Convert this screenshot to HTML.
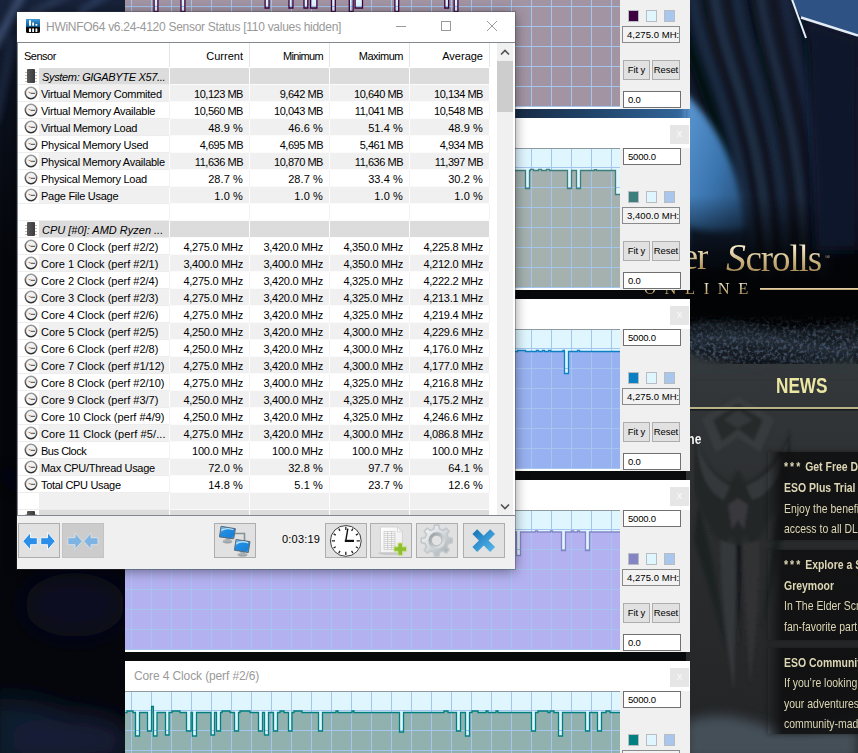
<!DOCTYPE html>
<html lang="en"><head><meta charset="utf-8"><title>HWiNFO64 Sensor Status</title>
<style>
*{box-sizing:border-box;margin:0;padding:0}
html,body{width:858px;height:753px;overflow:hidden;background:#04060b}
body{position:relative;font-family:"Liberation Sans",sans-serif;font-size:11px;color:#000}
#bg{position:absolute;left:0;top:0}
/* ---- ESO launcher bits ---- */
.eso{position:absolute;white-space:nowrap;font-family:"Liberation Serif",serif;color:#dccb9f;background:linear-gradient(#f3e8c6 25%,#c9b07a 60%,#a88a55 85%);-webkit-background-clip:text;background-clip:text;-webkit-text-fill-color:transparent}
.news{position:absolute;white-space:nowrap;font-family:"Liberation Sans",sans-serif;color:#ddd6b8;transform-origin:0 50%}
.nb{position:absolute;left:768px;width:98px;background:linear-gradient(to right,rgba(14,14,15,0),rgba(14,14,15,.85) 14px);box-shadow:0 0 4px 1px rgba(14,14,15,.35)}
.news i{font-style:normal;letter-spacing:2.600px}
/* ---- graph windows ---- */
.gw{position:absolute;left:125px;width:565px;height:172px;background:#fff}
.gt{position:absolute;left:9px;top:7px;font-size:12px;line-height:16px;color:#9a9a9a;white-space:nowrap;letter-spacing:-.12px}
.gc{position:absolute;left:545px;top:7px;width:19px;height:19px;background:#e6e6e6;color:#fafafa;font-size:11px;line-height:17px;text-align:center}
.gr{position:absolute;left:0;top:30px}
.gp{position:absolute;left:495px;top:30px;width:70px;height:142px;background:#f0f0f0}
.bx{position:absolute;left:3px;width:58px;height:17px;border:1px solid #707070;background:#fff;font-size:9.500px;line-height:15px;padding-left:4px;letter-spacing:-.2px;white-space:nowrap;overflow:hidden}
.b1{top:0}.b2{top:59px;left:2px;background:#f2f2f2;border-color:#8a8a8a;padding-left:4px;letter-spacing:.05px}.b3{top:124px}
.sw{position:absolute;top:43px;width:11px;height:12px;border:1px solid #b9bcc0}
.bt{position:absolute;top:93px;height:20px;border:1px solid #adadad;background:#e1e1e1;font-size:9.500px;line-height:18px;letter-spacing:-.1px;text-align:center;white-space:nowrap}
/* ---- HWiNFO window ---- */
#hw{position:absolute;left:17px;top:12px;width:498px;height:557px;background:#fff;box-shadow:0 0 0 1px rgba(60,60,70,.35),0 2px 12px rgba(0,0,0,.45)}
#tb{position:absolute;left:0;top:0;width:498px;height:30px;background:#fff}
#tt{position:absolute;left:29px;top:7px;font-size:12px;line-height:16px;color:#999;white-space:nowrap;letter-spacing:-.28px}
#lv{position:absolute;left:0;top:30px;width:498px;height:474px;border:1px solid #828790;border-right:none;background:#fff;overflow:hidden}
#hd{position:absolute;left:0;top:0;width:472px;height:25px;background:#fff}
#hd div{position:absolute;top:0;height:24px;line-height:26px;border-right:1px solid #e5e5e5;white-space:nowrap}
.r{position:absolute;left:0;width:472px;height:17px;white-space:nowrap}
.r>div{position:absolute;top:0;height:17px;line-height:18px;border-bottom:1px solid #fbfbfb;border-right:1px solid #f2f2f2;overflow:hidden}
.r .c0{left:0;width:152px}
.r .c0 b,.r .c0 em{position:absolute;left:21px;top:0;width:130px;height:16px;padding-left:2px;font-weight:normal;line-height:18px;overflow:hidden}
.r .c0 em{padding-left:3px}
.r .c{width:80px;text-align:right;padding-right:6px}
.r .c:nth-child(2){left:152px}.r .c:nth-child(3){left:232px}.r .c:nth-child(4){left:312px}.r .c:nth-child(5){left:392px}
.r.o .c,.r.o .c0 b{background:#f0f0f0}
.r.o>div{border-right-color:#fdfdfd}
.r.g .c,.r.g .c0 em{background:#dcdcdc}
.r.g>div{border-right-color:#fdfdfd}
.r .c0{border-bottom-color:#ededed}
.ic{position:absolute;left:6px;top:1px}
.r.g .ic{left:6px;top:0}
#sb{position:absolute;left:479px;top:0;width:16px;height:472px;background:#f0f0f0}
#sb i{position:absolute;left:0;top:18px;width:16px;height:51px;background:#cdcdcd}
#bar{position:absolute;left:0;top:504px;width:498px;height:53px;background:#f0f0f0}
.tbn{position:absolute;top:7px;width:42px;height:35px;border:1px solid #adadad;background:#e1e1e1}
.tbn svg{position:absolute;left:0;top:0}
#tm{position:absolute;left:265px;top:15px;font-size:11px;line-height:16px;letter-spacing:.2px}
</style></head>
<body>
<svg id="bg" width="858" height="753" viewBox="0 0 858 753">
<defs>
<linearGradient id="ckg" x1="0" y1="0" x2="0" y2="1"><stop offset="0" stop-color="#9a9a9a"/><stop offset="1" stop-color="#2e2e2e"/></linearGradient>
<linearGradient id="chg" x1="0" y1="0" x2="1" y2="0"><stop offset="0" stop-color="#5a5a5a"/><stop offset="1" stop-color="#3a3a3a"/></linearGradient>
<filter id="bl6" x="-30%" y="-30%" width="160%" height="160%"><feGaussianBlur stdDeviation="6"/></filter>
<filter id="bl12" x="-30%" y="-30%" width="160%" height="160%"><feGaussianBlur stdDeviation="12"/></filter>
<filter id="bl3" x="-30%" y="-30%" width="160%" height="160%"><feGaussianBlur stdDeviation="3"/></filter>
<linearGradient id="gold" x1="0" y1="0" x2="0" y2="1"><stop offset="0" stop-color="#efe2bd"/><stop offset="1" stop-color="#b39560"/></linearGradient>
</defs>
<rect width="858" height="753" fill="#04060b"/>
<defs><linearGradient id="tl" x1="0" y1="0" x2="0" y2="1"><stop offset="0" stop-color="#18233a"/><stop offset=".35" stop-color="#0b111d"/><stop offset="1" stop-color="#04060b"/></linearGradient><linearGradient id="rc" x1="0" y1="0" x2="0" y2="1"><stop offset="0" stop-color="#121c2d"/><stop offset=".6" stop-color="#0e1726"/><stop offset=".8" stop-color="#05080e"/><stop offset="1" stop-color="#020305"/></linearGradient><linearGradient id="sky" x1="0" y1="0" x2="1" y2="1"><stop offset="0" stop-color="#5f9bd6"/><stop offset=".5" stop-color="#3a74ae"/><stop offset="1" stop-color="#1c3a5c"/></linearGradient><linearGradient id="pan" x1="0" y1="0" x2="0" y2="1"><stop offset="0" stop-color="#34383b"/><stop offset=".4" stop-color="#2b2d2f"/><stop offset="1" stop-color="#222426"/></linearGradient><linearGradient id="gapg" x1="0" y1="0" x2="1" y2="0"><stop offset="0" stop-color="#15263d"/><stop offset=".5" stop-color="#21456c"/><stop offset="1" stop-color="#34699e"/></linearGradient></defs><rect x="0" y="0" width="130" height="260" fill="url(#tl)"/><g filter="url(#bl3)" fill="none" stroke-linecap="round"><path d="M-5 45L22 -5" stroke="#3d4f73" stroke-width="7"/><path d="M30 14L70 -6" stroke="#2b3a58" stroke-width="6"/><path d="M80 12L108 -6" stroke="#32456a" stroke-width="5"/><path d="M-4 120L12 40" stroke="#1b2741" stroke-width="8"/></g><g filter="url(#bl12)"><ellipse cx="75" cy="605" rx="50" ry="32" fill="#0a1120"/><path d="M-10 700Q60 690 130 760L-10 770Z" fill="#111a2e"/><ellipse cx="70" cy="740" rx="60" ry="26" fill="#141e34"/><path d="M0 470Q50 500 100 540" stroke="#080d18" stroke-width="14" fill="none"/></g><rect x="125" y="100" width="565" height="30" fill="#0b1220"/><rect x="500" y="100" width="190" height="30" fill="url(#gapg)"/><rect x="125" y="285" width="565" height="20" fill="#06080c"/><rect x="125" y="465" width="565" height="20" fill="#0a0b0d"/><rect x="125" y="648" width="565" height="20" fill="#08090b"/><rect x="686" y="0" width="172" height="335" fill="url(#rc)"/><g filter="url(#bl3)" fill="none" stroke-linecap="round"><path d="M676 -8C686 70 733 120 742 275" stroke="#05080e" stroke-width="9"/><path d="M692 -8C702 70 746 120 754 275" stroke="#1f2d46" stroke-width="7"/><path d="M704 -8C714 70 756 120 763 275" stroke="#080c14" stroke-width="5"/><path d="M714 -8C724 70 764 120 770 275" stroke="#27374f" stroke-width="6"/><path d="M726 -8C736 70 774 120 779 275" stroke="#0a0f19" stroke-width="5"/><path d="M736 -8C746 70 783 120 787 275" stroke="#1c2a42" stroke-width="8"/><path d="M750 -8C760 70 794 120 797 275" stroke="#070b13" stroke-width="5"/><path d="M760 -8C770 70 803 120 805 275" stroke="#25354e" stroke-width="5"/><path d="M772 -8C782 70 813 120 814 275" stroke="#0b111c" stroke-width="6"/><path d="M784 -8C794 70 823 120 823 275" stroke="#1b2840" stroke-width="8"/><path d="M798 -8C808 70 834 120 833 275" stroke="#080d16" stroke-width="5"/><path d="M825 40Q835 140 832 250" stroke="#13203a" stroke-width="14"/><path d="M850 40Q856 140 852 240" stroke="#0c1424" stroke-width="8"/></g><g filter="url(#bl3)"><path d="M684 92Q720 126 737 180Q747 215 746 250L732 262Q705 268 684 262Z" fill="url(#sky)"/><path d="M688 226Q715 234 746 228L746 268L686 270Z" fill="#152840"/></g><defs><linearGradient id="dk" x1="0" y1="0" x2="0" y2="1"><stop offset="0" stop-color="#020305" stop-opacity="0"/><stop offset=".55" stop-color="#020305" stop-opacity=".75"/><stop offset="1" stop-color="#020305" stop-opacity="1"/></linearGradient></defs><rect x="686" y="195" width="172" height="105" fill="url(#dk)"/><path d="M808 40L802 19L858 38V250H816Z" fill="#0d172c" filter="url(#bl6)"/><path d="M792 0H858V36L801 18Z" fill="#2f5285"/><g filter="url(#bl3)" opacity=".0"></g><path d="M791.500 -2L806 38" stroke="#e6eef6" stroke-width="2" fill="none"/><path d="M801 17.500L858 35.500" stroke="#e3ebf4" stroke-width="2.400" fill="none"/><rect x="686" y="296" width="172" height="30" fill="#020304"/><g filter="url(#bl3)"><path d="M686 325Q720 318 760 326T858 322V362Q820 372 790 366T730 362T686 356Z" fill="#171c24"/><path d="M690 342Q740 334 800 346T858 340" stroke="#222a35" stroke-width="10" fill="none"/></g><defs><filter id="nz" x="0" y="0" width="100%" height="100%" color-interpolation-filters="sRGB"><feTurbulence type="fractalNoise" baseFrequency=".3" numOctaves="3" seed="7" result="t"/><feColorMatrix in="t" type="matrix" values="0 0 0 0 .25  0 0 0 0 .31  0 0 0 0 .39  0 0 0 3.200 -1.400"/></filter><linearGradient id="nzm" x1="0" y1="0" x2="0" y2="1"><stop offset="0" stop-color="#fff" stop-opacity="0"/><stop offset=".45" stop-color="#fff" stop-opacity="1"/><stop offset=".8" stop-color="#fff" stop-opacity="1"/><stop offset="1" stop-color="#fff" stop-opacity="0"/></linearGradient><mask id="nzk"><rect x="686" y="314" width="172" height="56" fill="url(#nzm)"/></mask></defs><g mask="url(#nzk)"><rect x="686" y="314" width="172" height="56" filter="url(#nz)"/></g><rect x="686" y="364" width="172" height="389" fill="url(#pan)"/><g filter="url(#bl3)"><path d="M686 352Q700 358 720 362T770 368T830 364L858 360V374H686Z" fill="#33373a"/></g><defs><filter id="bl1" x="-20%" y="-20%" width="140%" height="140%"><feGaussianBlur stdDeviation="1.600"/></filter></defs><g filter="url(#bl1)"><path d="M738 396L774 419L760 452L738 437L716 452L702 419Z" fill="#383b3e"/><path d="M738 404L763 420L754 441L738 429L722 441L713 420Z" fill="#27292b"/><path d="M738 410L752 420L738 428L724 420Z" fill="#34373a"/><path d="M694 432Q704 470 730 482L738 470L746 482Q776 468 790 430Q796 480 770 520Q760 540 752 548L745 536L738 552L731 536L724 548Q700 520 694 490Z" fill="#232527"/><path d="M696 440Q706 474 730 486L724 500Q700 490 696 440ZM788 440Q776 474 746 486L752 500Q782 490 788 440Z" fill="#35383b"/><path d="M728 505L738 498L748 505L744 530L738 520L732 530Z" fill="#37393c"/><path d="M720 540L736 545L734 692Q722 620 720 540Z" fill="#34373a"/><path d="M742 545L759 540Q760 610 750 684Z" fill="#303336"/><path d="M698 505Q716 560 726 650Q710 590 694 540Z" fill="#1f2123"/><path d="M778 505Q770 560 762 630Q776 570 784 530Z" fill="#1f2123"/><path d="M736 545L742 545L739 650Z" fill="#18191b"/></g><g filter="url(#bl6)"><path d="M686 722Q720 708 760 724T858 716V760H686Z" fill="#454f58"/></g><rect x="686" y="407" width="172" height="2" fill="#b9b285"/><rect x="686" y="409" width="172" height="1.500" fill="#17181a"/><rect x="760" y="288" width="98" height="2" fill="url(#gold)"/>
</svg>
<div class="eso" id="el" style="right:150px;top:237px;font-size:37px;line-height:40px;letter-spacing:-1.300px">Elder</div><div class="eso" style="left:726px;top:237px;font-size:37px;line-height:40px;letter-spacing:-1.100px"><span style="font-size:40px;font-style:italic;letter-spacing:-.5px">S</span>crolls<span style="font-size:7px;vertical-align:12px;margin-left:4px;letter-spacing:0">®</span></div><div class="eso" style="left:644px;top:280px;font-size:16.500px;line-height:18px;letter-spacing:8.600px;color:#c9b88a">ONLINE</div><div class="news" style="left:776px;top:374px;font-size:22px;line-height:24px;font-weight:bold;color:#ebe6a2;transform:scaleX(.78)">NEWS</div><div class="news" style="left:664px;top:429px;font-size:15px;line-height:20px;font-weight:bold;color:#f4f4f4;transform:scaleX(.8)">Online</div><div class="nb" style="top:452px;height:88px"></div><div class="nb" style="top:550px;height:90px"></div><div class="nb" style="top:648px;height:86px"></div><div class="news" style="left:784px;top:458px;font-size:13.500px;line-height:18px;font-weight:bold;color:#dcd6b4;transform:scaleX(.775)"><i>***</i> Get Free DLC</div><div class="news" style="left:784px;top:479px;font-size:13.500px;line-height:18px;font-weight:bold;color:#dcd6b4;transform:scaleX(.775)">ESO Plus Trial</div><div class="news" style="left:784px;top:500px;font-size:13.500px;line-height:18px;color:#dcd6b4;transform:scaleX(.775)">Enjoy the benefits</div><div class="news" style="left:784px;top:520px;font-size:13.500px;line-height:18px;color:#dcd6b4;transform:scaleX(.775)">access to all DLC</div><div class="news" style="left:784px;top:556px;font-size:13.500px;line-height:18px;font-weight:bold;color:#dcd6b4;transform:scaleX(.775)"><i>***</i> Explore a Sk</div><div class="news" style="left:784px;top:577px;font-size:13.500px;line-height:18px;font-weight:bold;color:#dcd6b4;transform:scaleX(.775)">Greymoor</div><div class="news" style="left:784px;top:597px;font-size:13.500px;line-height:18px;color:#dcd6b4;transform:scaleX(.775)">In The Elder Scro</div><div class="news" style="left:784px;top:618px;font-size:13.500px;line-height:18px;color:#dcd6b4;transform:scaleX(.775)">fan-favorite part</div><div class="news" style="left:784px;top:654px;font-size:13.500px;line-height:18px;font-weight:bold;color:#dcd6b4;transform:scaleX(.775)">ESO Community</div><div class="news" style="left:784px;top:674px;font-size:13.500px;line-height:18px;color:#dcd6b4;transform:scaleX(.775)">If you’re looking f</div><div class="news" style="left:784px;top:695px;font-size:13.500px;line-height:18px;color:#dcd6b4;transform:scaleX(.775)">your adventures,</div><div class="news" style="left:784px;top:715px;font-size:13.500px;line-height:18px;color:#dcd6b4;transform:scaleX(.775)">community-made</div>
<div class="gw" style="top:-63px"><div class="gt">Core 0 Clock (perf #2/2)</div><div class="gc"><span>x</span></div><svg class="gr" width="495" height="140" viewBox="0 0 495 140"><rect width="495" height="140" fill="#dff6ff"/><path d="M0.0 20.5 L29.1 20.5 L29.1 44.5 L32.9 44.5 L32.9 20.5 L56.0 20.5 L56.0 44.5 L59.9 44.5 L59.9 20.5 L140.1 20.5 L140.1 41.0 L144.0 41.0 L144.0 20.5 L164.0 20.5 L164.0 41.0 L167.9 41.0 L167.9 20.5 L179.0 20.5 L179.0 41.0 L182.8 41.0 L182.8 20.5 L185.5 20.5 L185.5 41.0 L191.9 41.0 L191.9 20.5 L206.5 20.5 L206.5 44.5 L210.3 44.5 L210.3 20.5 L224.3 20.5 L224.3 44.5 L228.1 44.5 L228.1 20.5 L230.1 20.5 L230.1 41.0 L237.5 41.0 L237.5 20.5 L269.9 20.5 L269.9 44.5 L273.7 44.5 L273.7 20.5 L319.8 20.5 L319.8 41.0 L323.6 41.0 L323.6 20.5 L329.2 20.5 L329.2 44.5 L332.9 44.5 L332.9 20.5 L495.0 20.5 L495.0 140.0 L0.0 140.0 Z" fill="#a394a4"/><g stroke="#a4c5ee" stroke-width="1" fill="none"><path d="M6.5 0V140"/><path d="M26.5 0V140"/><path d="M46.5 0V140"/><path d="M66.5 0V140"/><path d="M86.5 0V140"/><path d="M106.5 0V140"/><path d="M126.5 0V140"/><path d="M146.5 0V140"/><path d="M166.5 0V140"/><path d="M186.5 0V140"/><path d="M206.5 0V140"/><path d="M226.5 0V140"/><path d="M246.5 0V140"/><path d="M266.5 0V140"/><path d="M286.5 0V140"/><path d="M306.5 0V140"/><path d="M326.5 0V140"/><path d="M346.5 0V140"/><path d="M366.5 0V140"/><path d="M386.5 0V140"/><path d="M406.5 0V140"/><path d="M426.5 0V140"/><path d="M446.5 0V140"/><path d="M466.5 0V140"/><path d="M486.5 0V140"/><path d="M0 19.5H495"/><path d="M0 39.5H495"/><path d="M0 59.5H495"/><path d="M0 79.5H495"/><path d="M0 99.5H495"/><path d="M0 119.5H495"/><path d="M0 139.5H495"/></g><path d="M0.0 20.5 L29.1 20.5 L29.1 44.5 L32.9 44.5 L32.9 20.5 L56.0 20.5 L56.0 44.5 L59.9 44.5 L59.9 20.5 L140.1 20.5 L140.1 41.0 L144.0 41.0 L144.0 20.5 L164.0 20.5 L164.0 41.0 L167.9 41.0 L167.9 20.5 L179.0 20.5 L179.0 41.0 L182.8 41.0 L182.8 20.5 L185.5 20.5 L185.5 41.0 L191.9 41.0 L191.9 20.5 L206.5 20.5 L206.5 44.5 L210.3 44.5 L210.3 20.5 L224.3 20.5 L224.3 44.5 L228.1 44.5 L228.1 20.5 L230.1 20.5 L230.1 41.0 L237.5 41.0 L237.5 20.5 L269.9 20.5 L269.9 44.5 L273.7 44.5 L273.7 20.5 L319.8 20.5 L319.8 41.0 L323.6 41.0 L323.6 20.5 L329.2 20.5 L329.2 44.5 L332.9 44.5 L332.9 20.5 L495.0 20.5" fill="none" stroke="#3d0040" stroke-width="1.3"/><path d="M0 .5H495" stroke="#8d9aa0" stroke-width="1"/></svg><div class="gp"><div class="bx b1">5000.0</div><i class="sw" style="left:8px;background:#3d0040"></i><i class="sw" style="left:26px;background:#dff6ff"></i><i class="sw" style="left:44px;background:#a9c7ed"></i><div class="bx b2">4,275.0 MH:</div><div class="bt" style="left:3px;width:27px">Fit y</div><div class="bt" style="left:32px;width:28px">Reset</div><div class="bx b3">0.0</div></div></div><div class="gw" style="top:118px"><div class="gt">Core 1 Clock (perf #2/1)</div><div class="gc"><span>x</span></div><svg class="gr" width="495" height="140" viewBox="0 0 495 140"><rect width="495" height="140" fill="#dff6ff"/><path d="M0.0 22.5 L400.5 22.5 L400.5 40.5 L404.5 40.5 L404.5 22.5 L405.5 22.5 L405.5 21.4 L408.5 21.4 L408.5 22.5 L413.5 22.5 L413.5 21.4 L416.5 21.4 L416.5 22.5 L421.5 22.5 L421.5 21.4 L424.5 21.4 L424.5 22.5 L442.5 22.5 L442.5 40.5 L446.5 40.5 L446.5 22.5 L451.5 22.5 L451.5 40.5 L455.5 40.5 L455.5 22.5 L469.5 22.5 L469.5 21.6 L471.5 21.6 L471.5 22.5 L490.5 22.5 L490.5 46.5 L500.0 46.5 L500.0 22.5 L495.0 22.5 L495.0 140.0 L0.0 140.0 Z" fill="#a4b1ae"/><g stroke="#a4c5ee" stroke-width="1" fill="none"><path d="M6.5 0V140"/><path d="M26.5 0V140"/><path d="M46.5 0V140"/><path d="M66.5 0V140"/><path d="M86.5 0V140"/><path d="M106.5 0V140"/><path d="M126.5 0V140"/><path d="M146.5 0V140"/><path d="M166.5 0V140"/><path d="M186.5 0V140"/><path d="M206.5 0V140"/><path d="M226.5 0V140"/><path d="M246.5 0V140"/><path d="M266.5 0V140"/><path d="M286.5 0V140"/><path d="M306.5 0V140"/><path d="M326.5 0V140"/><path d="M346.5 0V140"/><path d="M366.5 0V140"/><path d="M386.5 0V140"/><path d="M406.5 0V140"/><path d="M426.5 0V140"/><path d="M446.5 0V140"/><path d="M466.5 0V140"/><path d="M486.5 0V140"/><path d="M0 19.5H495"/><path d="M0 39.5H495"/><path d="M0 59.5H495"/><path d="M0 79.5H495"/><path d="M0 99.5H495"/><path d="M0 119.5H495"/><path d="M0 139.5H495"/></g><path d="M0.0 22.5 L400.5 22.5 L400.5 40.5 L404.5 40.5 L404.5 22.5 L405.5 22.5 L405.5 21.4 L408.5 21.4 L408.5 22.5 L413.5 22.5 L413.5 21.4 L416.5 21.4 L416.5 22.5 L421.5 22.5 L421.5 21.4 L424.5 21.4 L424.5 22.5 L442.5 22.5 L442.5 40.5 L446.5 40.5 L446.5 22.5 L451.5 22.5 L451.5 40.5 L455.5 40.5 L455.5 22.5 L469.5 22.5 L469.5 21.6 L471.5 21.6 L471.5 22.5 L490.5 22.5 L490.5 46.5 L500.0 46.5 L500.0 22.5 L495.0 22.5" fill="none" stroke="#3c7f7c" stroke-width="1.3"/><path d="M0 .5H495" stroke="#8d9aa0" stroke-width="1"/></svg><div class="gp"><div class="bx b1">5000.0</div><i class="sw" style="left:8px;background:#3c7f7c"></i><i class="sw" style="left:26px;background:#dff6ff"></i><i class="sw" style="left:44px;background:#a9c7ed"></i><div class="bx b2">3,400.0 MH:</div><div class="bt" style="left:3px;width:27px">Fit y</div><div class="bt" style="left:32px;width:28px">Reset</div><div class="bx b3">0.0</div></div></div><div class="gw" style="top:299px"><div class="gt">Core 2 Clock (perf #2/4)</div><div class="gc"><span>x</span></div><svg class="gr" width="495" height="140" viewBox="0 0 495 140"><rect width="495" height="140" fill="#dff6ff"/><path d="M0.0 22.5 L392.5 22.5 L392.5 21.5 L400.5 21.5 L400.5 22.5 L411.5 22.5 L411.5 21.5 L413.5 21.5 L413.5 22.5 L417.5 22.5 L417.5 21.5 L419.5 21.5 L419.5 22.5 L423.5 22.5 L423.5 21.5 L425.5 21.5 L425.5 22.5 L438.0 22.5 L438.0 21.5 L439.4 21.5 L439.4 22.5 L439.5 22.5 L439.5 44.5 L443.5 44.5 L443.5 22.5 L452.5 22.5 L452.5 21.5 L454.5 21.5 L454.5 22.5 L495.0 22.5 L495.0 140.0 L0.0 140.0 Z" fill="#98b1f1"/><g stroke="#a4c5ee" stroke-width="1" fill="none"><path d="M6.5 0V140"/><path d="M26.5 0V140"/><path d="M46.5 0V140"/><path d="M66.5 0V140"/><path d="M86.5 0V140"/><path d="M106.5 0V140"/><path d="M126.5 0V140"/><path d="M146.5 0V140"/><path d="M166.5 0V140"/><path d="M186.5 0V140"/><path d="M206.5 0V140"/><path d="M226.5 0V140"/><path d="M246.5 0V140"/><path d="M266.5 0V140"/><path d="M286.5 0V140"/><path d="M306.5 0V140"/><path d="M326.5 0V140"/><path d="M346.5 0V140"/><path d="M366.5 0V140"/><path d="M386.5 0V140"/><path d="M406.5 0V140"/><path d="M426.5 0V140"/><path d="M446.5 0V140"/><path d="M466.5 0V140"/><path d="M486.5 0V140"/><path d="M0 19.5H495"/><path d="M0 39.5H495"/><path d="M0 59.5H495"/><path d="M0 79.5H495"/><path d="M0 99.5H495"/><path d="M0 119.5H495"/><path d="M0 139.5H495"/></g><path d="M0.0 22.5 L392.5 22.5 L392.5 21.5 L400.5 21.5 L400.5 22.5 L411.5 22.5 L411.5 21.5 L413.5 21.5 L413.5 22.5 L417.5 22.5 L417.5 21.5 L419.5 21.5 L419.5 22.5 L423.5 22.5 L423.5 21.5 L425.5 21.5 L425.5 22.5 L438.0 22.5 L438.0 21.5 L439.4 21.5 L439.4 22.5 L439.5 22.5 L439.5 44.5 L443.5 44.5 L443.5 22.5 L452.5 22.5 L452.5 21.5 L454.5 21.5 L454.5 22.5 L495.0 22.5" fill="none" stroke="#0b80c3" stroke-width="1.3"/><path d="M0 .5H495" stroke="#8d9aa0" stroke-width="1"/></svg><div class="gp"><div class="bx b1">5000.0</div><i class="sw" style="left:8px;background:#0b80c3"></i><i class="sw" style="left:26px;background:#dff6ff"></i><i class="sw" style="left:44px;background:#a9c7ed"></i><div class="bx b2">4,275.0 MH:</div><div class="bt" style="left:3px;width:27px">Fit y</div><div class="bt" style="left:32px;width:28px">Reset</div><div class="bx b3">0.0</div></div></div><div class="gw" style="top:480px"><div class="gt">Core 3 Clock (perf #2/3)</div><div class="gc"><span>x</span></div><svg class="gr" width="495" height="140" viewBox="0 0 495 140"><rect width="495" height="140" fill="#dff6ff"/><path d="M0.0 22.0 L391.5 22.0 L391.5 45.5 L395.5 45.5 L395.5 22.0 L410.5 22.0 L410.5 21.0 L412.5 21.0 L412.5 22.0 L425.5 22.0 L425.5 21.0 L427.5 21.0 L427.5 22.0 L436.5 22.0 L436.5 40.5 L440.5 40.5 L440.5 22.0 L446.5 22.0 L446.5 21.0 L448.5 21.0 L448.5 22.0 L452.5 22.0 L452.5 21.0 L454.5 21.0 L454.5 22.0 L460.5 22.0 L460.5 40.5 L464.5 40.5 L464.5 22.0 L495.0 22.0 L495.0 140.0 L0.0 140.0 Z" fill="#b4b1f1"/><g stroke="#a4c5ee" stroke-width="1" fill="none"><path d="M6.5 0V140"/><path d="M26.5 0V140"/><path d="M46.5 0V140"/><path d="M66.5 0V140"/><path d="M86.5 0V140"/><path d="M106.5 0V140"/><path d="M126.5 0V140"/><path d="M146.5 0V140"/><path d="M166.5 0V140"/><path d="M186.5 0V140"/><path d="M206.5 0V140"/><path d="M226.5 0V140"/><path d="M246.5 0V140"/><path d="M266.5 0V140"/><path d="M286.5 0V140"/><path d="M306.5 0V140"/><path d="M326.5 0V140"/><path d="M346.5 0V140"/><path d="M366.5 0V140"/><path d="M386.5 0V140"/><path d="M406.5 0V140"/><path d="M426.5 0V140"/><path d="M446.5 0V140"/><path d="M466.5 0V140"/><path d="M486.5 0V140"/><path d="M0 19.5H495"/><path d="M0 39.5H495"/><path d="M0 59.5H495"/><path d="M0 79.5H495"/><path d="M0 99.5H495"/><path d="M0 119.5H495"/><path d="M0 139.5H495"/></g><path d="M0.0 22.0 L391.5 22.0 L391.5 45.5 L395.5 45.5 L395.5 22.0 L410.5 22.0 L410.5 21.0 L412.5 21.0 L412.5 22.0 L425.5 22.0 L425.5 21.0 L427.5 21.0 L427.5 22.0 L436.5 22.0 L436.5 40.5 L440.5 40.5 L440.5 22.0 L446.5 22.0 L446.5 21.0 L448.5 21.0 L448.5 22.0 L452.5 22.0 L452.5 21.0 L454.5 21.0 L454.5 22.0 L460.5 22.0 L460.5 40.5 L464.5 40.5 L464.5 22.0 L495.0 22.0" fill="none" stroke="#8585c5" stroke-width="1.3"/><path d="M0 .5H495" stroke="#8d9aa0" stroke-width="1"/></svg><div class="gp"><div class="bx b1">5000.0</div><i class="sw" style="left:8px;background:#8585c5"></i><i class="sw" style="left:26px;background:#dff6ff"></i><i class="sw" style="left:44px;background:#a9c7ed"></i><div class="bx b2">4,275.0 MH:</div><div class="bt" style="left:3px;width:27px">Fit y</div><div class="bt" style="left:32px;width:28px">Reset</div><div class="bx b3">0.0</div></div></div><div class="gw" style="top:661px"><div class="gt">Core 4 Clock (perf #2/6)</div><div class="gc"><span>x</span></div><svg class="gr" width="495" height="140" viewBox="0 0 495 140"><rect width="495" height="140" fill="#dff6ff"/><path d="M0.0 21.5 L2.0 21.5 L2.0 20.0 L8.0 20.0 L8.0 21.5 L10.5 21.5 L10.5 45.0 L14.5 45.0 L14.5 21.5 L22.5 21.5 L22.5 40.0 L26.5 40.0 L26.5 21.5 L26.6 21.5 L26.6 15.5 L28.4 15.5 L28.4 21.5 L28.5 21.5 L28.5 45.0 L32.0 45.0 L32.0 21.5 L40.5 21.5 L40.5 44.0 L44.0 44.0 L44.0 21.5 L47.0 21.5 L47.0 20.0 L55.0 20.0 L55.0 21.5 L61.5 21.5 L61.5 40.0 L66.0 40.0 L66.0 21.5 L67.5 21.5 L67.5 45.0 L71.5 45.0 L71.5 21.5 L86.0 21.5 L86.0 44.0 L89.5 44.0 L89.5 21.5 L91.5 21.5 L91.5 40.0 L95.5 40.0 L95.5 21.5 L97.0 21.5 L97.0 20.0 L105.0 20.0 L105.0 21.5 L109.5 21.5 L109.5 40.0 L113.5 40.0 L113.5 21.5 L115.0 21.5 L115.0 20.0 L125.0 20.0 L125.0 21.5 L133.5 21.5 L133.5 40.0 L137.5 40.0 L137.5 21.5 L139.5 21.5 L139.5 44.0 L143.5 44.0 L143.5 21.5 L148.5 21.5 L148.5 40.0 L152.5 40.0 L152.5 21.5 L155.0 21.5 L155.0 20.0 L159.0 20.0 L159.0 21.5 L163.5 21.5 L163.5 40.0 L167.0 40.0 L167.0 21.5 L169.0 21.5 L169.0 20.0 L177.0 20.0 L177.0 21.5 L193.5 21.5 L193.5 40.0 L197.5 40.0 L197.5 21.5 L211.0 21.5 L211.0 20.0 L213.0 20.0 L213.0 21.5 L227.0 21.5 L227.0 20.0 L229.0 20.0 L229.0 21.5 L274.5 21.5 L274.5 41.0 L278.5 41.0 L278.5 21.5 L319.0 21.5 L319.0 20.0 L323.0 20.0 L323.0 21.5 L331.5 21.5 L331.5 40.0 L335.5 40.0 L335.5 21.5 L340.5 21.5 L340.5 45.0 L344.5 45.0 L344.5 21.5 L347.0 21.5 L347.0 20.0 L353.0 20.0 L353.0 21.5 L361.0 21.5 L361.0 20.0 L363.0 20.0 L363.0 21.5 L371.0 21.5 L371.0 20.0 L373.0 20.0 L373.0 21.5 L406.5 21.5 L406.5 40.0 L410.5 40.0 L410.5 21.5 L413.0 21.5 L413.0 20.0 L423.0 20.0 L423.0 21.5 L425.0 21.5 L425.0 20.0 L429.0 20.0 L429.0 21.5 L433.5 21.5 L433.5 45.0 L437.5 45.0 L437.5 21.5 L460.5 21.5 L460.5 40.0 L464.5 40.0 L464.5 21.5 L472.5 21.5 L472.5 40.0 L476.5 40.0 L476.5 21.5 L481.0 21.5 L481.0 20.0 L485.0 20.0 L485.0 21.5 L495.0 21.5 L495.0 140.0 L0.0 140.0 Z" fill="#90b1ae"/><g stroke="#a4c5ee" stroke-width="1" fill="none"><path d="M6.5 0V140"/><path d="M26.5 0V140"/><path d="M46.5 0V140"/><path d="M66.5 0V140"/><path d="M86.5 0V140"/><path d="M106.5 0V140"/><path d="M126.5 0V140"/><path d="M146.5 0V140"/><path d="M166.5 0V140"/><path d="M186.5 0V140"/><path d="M206.5 0V140"/><path d="M226.5 0V140"/><path d="M246.5 0V140"/><path d="M266.5 0V140"/><path d="M286.5 0V140"/><path d="M306.5 0V140"/><path d="M326.5 0V140"/><path d="M346.5 0V140"/><path d="M366.5 0V140"/><path d="M386.5 0V140"/><path d="M406.5 0V140"/><path d="M426.5 0V140"/><path d="M446.5 0V140"/><path d="M466.5 0V140"/><path d="M486.5 0V140"/><path d="M0 19.5H495"/><path d="M0 39.5H495"/><path d="M0 59.5H495"/><path d="M0 79.5H495"/><path d="M0 99.5H495"/><path d="M0 119.5H495"/><path d="M0 139.5H495"/></g><path d="M0.0 21.5 L2.0 21.5 L2.0 20.0 L8.0 20.0 L8.0 21.5 L10.5 21.5 L10.5 45.0 L14.5 45.0 L14.5 21.5 L22.5 21.5 L22.5 40.0 L26.5 40.0 L26.5 21.5 L26.6 21.5 L26.6 15.5 L28.4 15.5 L28.4 21.5 L28.5 21.5 L28.5 45.0 L32.0 45.0 L32.0 21.5 L40.5 21.5 L40.5 44.0 L44.0 44.0 L44.0 21.5 L47.0 21.5 L47.0 20.0 L55.0 20.0 L55.0 21.5 L61.5 21.5 L61.5 40.0 L66.0 40.0 L66.0 21.5 L67.5 21.5 L67.5 45.0 L71.5 45.0 L71.5 21.5 L86.0 21.5 L86.0 44.0 L89.5 44.0 L89.5 21.5 L91.5 21.5 L91.5 40.0 L95.5 40.0 L95.5 21.5 L97.0 21.5 L97.0 20.0 L105.0 20.0 L105.0 21.5 L109.5 21.5 L109.5 40.0 L113.5 40.0 L113.5 21.5 L115.0 21.5 L115.0 20.0 L125.0 20.0 L125.0 21.5 L133.5 21.5 L133.5 40.0 L137.5 40.0 L137.5 21.5 L139.5 21.5 L139.5 44.0 L143.5 44.0 L143.5 21.5 L148.5 21.5 L148.5 40.0 L152.5 40.0 L152.5 21.5 L155.0 21.5 L155.0 20.0 L159.0 20.0 L159.0 21.5 L163.5 21.5 L163.5 40.0 L167.0 40.0 L167.0 21.5 L169.0 21.5 L169.0 20.0 L177.0 20.0 L177.0 21.5 L193.5 21.5 L193.5 40.0 L197.5 40.0 L197.5 21.5 L211.0 21.5 L211.0 20.0 L213.0 20.0 L213.0 21.5 L227.0 21.5 L227.0 20.0 L229.0 20.0 L229.0 21.5 L274.5 21.5 L274.5 41.0 L278.5 41.0 L278.5 21.5 L319.0 21.5 L319.0 20.0 L323.0 20.0 L323.0 21.5 L331.5 21.5 L331.5 40.0 L335.5 40.0 L335.5 21.5 L340.5 21.5 L340.5 45.0 L344.5 45.0 L344.5 21.5 L347.0 21.5 L347.0 20.0 L353.0 20.0 L353.0 21.5 L361.0 21.5 L361.0 20.0 L363.0 20.0 L363.0 21.5 L371.0 21.5 L371.0 20.0 L373.0 20.0 L373.0 21.5 L406.5 21.5 L406.5 40.0 L410.5 40.0 L410.5 21.5 L413.0 21.5 L413.0 20.0 L423.0 20.0 L423.0 21.5 L425.0 21.5 L425.0 20.0 L429.0 20.0 L429.0 21.5 L433.5 21.5 L433.5 45.0 L437.5 45.0 L437.5 21.5 L460.5 21.5 L460.5 40.0 L464.5 40.0 L464.5 21.5 L472.5 21.5 L472.5 40.0 L476.5 40.0 L476.5 21.5 L481.0 21.5 L481.0 20.0 L485.0 20.0 L485.0 21.5 L495.0 21.5" fill="none" stroke="#008080" stroke-width="1.3"/><path d="M0 .5H495" stroke="#8d9aa0" stroke-width="1"/></svg><div class="gp"><div class="bx b1">5000.0</div><i class="sw" style="left:8px;background:#008080"></i><i class="sw" style="left:26px;background:#dff6ff"></i><i class="sw" style="left:44px;background:#a9c7ed"></i><div class="bx b2">4,275.0 MH:</div><div class="bt" style="left:3px;width:27px">Fit y</div><div class="bt" style="left:32px;width:28px">Reset</div><div class="bx b3">0.0</div></div></div>
<div id="hw">
 <div id="tb">
  <svg style="position:absolute;left:9px;top:7px" width="14" height="14" viewBox="0 0 14 14"><defs><linearGradient id="hwi" x1="0" y1="0" x2="0" y2="1"><stop offset="0" stop-color="#3a9be0"/><stop offset="1" stop-color="#0a5285"/></linearGradient></defs><rect width="14" height="14" rx="1.6" fill="#0a0a0a"/><path d="M1.6 0H12.4A1.6 1.6 0 0 1 14 1.6V8H0V1.6A1.6 1.6 0 0 1 1.600 0Z" fill="url(#hwi)"/><path d="M3 1.3H5V6.8H3ZM6.2 3.6H8V6.8H6.200ZM9.500 5H11.300V6.800H9.500ZM3 9.500H5V13H3ZM6.200 9.500H8V13H6.200ZM9.500 9.500H11.300V13H9.500Z" fill="#fff"/></svg>
  <div id="tt">HWiNFO64 v6.24-4120 Sensor Status [110 values hidden]</div>
  <svg style="position:absolute;left:370px;top:0" width="128" height="30" viewBox="0 0 128 30"><g stroke="#9a9a9a" stroke-width="1" fill="none"><path d="M9 14.500H19"/><rect x="54.500" y="9.500" width="9" height="9"/><path d="M100 9L110 19M110 9L100 19"/></g></svg>
 </div>
 <div id="lv">
  <div id="hd"><div style="left:0;width:152px;padding-left:6px;letter-spacing:-.5px">Sensor</div><div style="left:152px;width:80px;text-align:right;padding-right:6px">Current</div><div style="left:232px;width:80px;text-align:right;padding-right:6px;letter-spacing:-.67px">Minimum</div><div style="left:312px;width:80px;text-align:right;padding-right:6px;letter-spacing:-.5px">Maximum</div><div style="left:392px;width:80px;text-align:right;padding-right:6px">Average</div></div>
  <div id="rows" style="position:absolute;left:0;top:25px"><div class="r g" style="top:0px"><div class="c0"><svg class="ic" width="14" height="16" viewBox="0 0 14 16"><g stroke="#bdbdbd" stroke-width="1"><path d="M1 4.5H13M1 7.5H13M1 10.5H13M1 13.5H13"/></g><rect x="3" y="1" width="8" height="14" rx="1" fill="url(#chg)"/></svg><em style="letter-spacing:-0.33px">System: GIGABYTE X57...</em></div><div class="c"></div><div class="c"></div><div class="c"></div><div class="c"></div></div><div class="r o" style="top:17px"><div class="c0"><svg class="ic" width="14" height="14" viewBox="0 0 14 14"><circle cx="7" cy="7" r="5.7" fill="#f2f2f2" stroke="url(#ckg)" stroke-width="1.5"/><path d="M7 7.3H11" stroke="#444" stroke-width="1"/><path d="M7 7.2L4.6 6.3" stroke="#b07a50" stroke-width="1"/></svg><b style="letter-spacing:-0.27px">Virtual Memory Commited</b></div><div class="c" style="letter-spacing:-0.47px">10,123 MB</div><div class="c" style="letter-spacing:-0.47px">9,642 MB</div><div class="c" style="letter-spacing:-0.47px">10,640 MB</div><div class="c" style="letter-spacing:-0.47px">10,134 MB</div></div><div class="r" style="top:34px"><div class="c0"><svg class="ic" width="14" height="14" viewBox="0 0 14 14"><circle cx="7" cy="7" r="5.7" fill="#f2f2f2" stroke="url(#ckg)" stroke-width="1.5"/><path d="M7 7.3H11" stroke="#444" stroke-width="1"/><path d="M7 7.2L4.6 6.3" stroke="#b07a50" stroke-width="1"/></svg><b style="letter-spacing:-0.27px">Virtual Memory Available</b></div><div class="c" style="letter-spacing:-0.47px">10,560 MB</div><div class="c" style="letter-spacing:-0.47px">10,043 MB</div><div class="c" style="letter-spacing:-0.47px">11,041 MB</div><div class="c" style="letter-spacing:-0.47px">10,548 MB</div></div><div class="r o" style="top:51px"><div class="c0"><svg class="ic" width="14" height="14" viewBox="0 0 14 14"><circle cx="7" cy="7" r="5.7" fill="#f2f2f2" stroke="url(#ckg)" stroke-width="1.5"/><path d="M7 7.3H11" stroke="#444" stroke-width="1"/><path d="M7 7.2L4.6 6.3" stroke="#b07a50" stroke-width="1"/></svg><b style="letter-spacing:-0.27px">Virtual Memory Load</b></div><div class="c" style="letter-spacing:0.10px">48.9 %</div><div class="c" style="letter-spacing:0.10px">46.6 %</div><div class="c" style="letter-spacing:0.10px">51.4 %</div><div class="c" style="letter-spacing:0.10px">48.9 %</div></div><div class="r" style="top:68px"><div class="c0"><svg class="ic" width="14" height="14" viewBox="0 0 14 14"><circle cx="7" cy="7" r="5.7" fill="#f2f2f2" stroke="url(#ckg)" stroke-width="1.5"/><path d="M7 7.3H11" stroke="#444" stroke-width="1"/><path d="M7 7.2L4.6 6.3" stroke="#b07a50" stroke-width="1"/></svg><b style="letter-spacing:-0.27px">Physical Memory Used</b></div><div class="c" style="letter-spacing:-0.47px">4,695 MB</div><div class="c" style="letter-spacing:-0.47px">4,695 MB</div><div class="c" style="letter-spacing:-0.47px">5,461 MB</div><div class="c" style="letter-spacing:-0.47px">4,934 MB</div></div><div class="r o" style="top:85px"><div class="c0"><svg class="ic" width="14" height="14" viewBox="0 0 14 14"><circle cx="7" cy="7" r="5.7" fill="#f2f2f2" stroke="url(#ckg)" stroke-width="1.5"/><path d="M7 7.3H11" stroke="#444" stroke-width="1"/><path d="M7 7.2L4.6 6.3" stroke="#b07a50" stroke-width="1"/></svg><b style="letter-spacing:-0.27px">Physical Memory Available</b></div><div class="c" style="letter-spacing:-0.47px">11,636 MB</div><div class="c" style="letter-spacing:-0.47px">10,870 MB</div><div class="c" style="letter-spacing:-0.47px">11,636 MB</div><div class="c" style="letter-spacing:-0.47px">11,397 MB</div></div><div class="r" style="top:102px"><div class="c0"><svg class="ic" width="14" height="14" viewBox="0 0 14 14"><circle cx="7" cy="7" r="5.7" fill="#f2f2f2" stroke="url(#ckg)" stroke-width="1.5"/><path d="M7 7.3H11" stroke="#444" stroke-width="1"/><path d="M7 7.2L4.6 6.3" stroke="#b07a50" stroke-width="1"/></svg><b style="letter-spacing:-0.27px">Physical Memory Load</b></div><div class="c" style="letter-spacing:0.10px">28.7 %</div><div class="c" style="letter-spacing:0.10px">28.7 %</div><div class="c" style="letter-spacing:0.10px">33.4 %</div><div class="c" style="letter-spacing:0.10px">30.2 %</div></div><div class="r o" style="top:119px"><div class="c0"><svg class="ic" width="14" height="14" viewBox="0 0 14 14"><circle cx="7" cy="7" r="5.7" fill="#f2f2f2" stroke="url(#ckg)" stroke-width="1.5"/><path d="M7 7.3H11" stroke="#444" stroke-width="1"/><path d="M7 7.2L4.6 6.3" stroke="#b07a50" stroke-width="1"/></svg><b style="letter-spacing:-0.27px">Page File Usage</b></div><div class="c" style="letter-spacing:0.10px">1.0 %</div><div class="c" style="letter-spacing:0.10px">1.0 %</div><div class="c" style="letter-spacing:0.10px">1.0 %</div><div class="c" style="letter-spacing:0.10px">1.0 %</div></div><div class="r" style="top:136px"><div class="c0"><b></b></div><div class="c"></div><div class="c"></div><div class="c"></div><div class="c"></div></div><div class="r g" style="top:153px"><div class="c0"><svg class="ic" width="14" height="16" viewBox="0 0 14 16"><g stroke="#bdbdbd" stroke-width="1"><path d="M1 4.5H13M1 7.5H13M1 10.5H13M1 13.5H13"/></g><rect x="3" y="1" width="8" height="14" rx="1" fill="url(#chg)"/></svg><em>CPU [#0]: AMD Ryzen ...</em></div><div class="c"></div><div class="c"></div><div class="c"></div><div class="c"></div></div><div class="r" style="top:170px"><div class="c0"><svg class="ic" width="14" height="14" viewBox="0 0 14 14"><circle cx="7" cy="7" r="5.7" fill="#f2f2f2" stroke="url(#ckg)" stroke-width="1.5"/><path d="M7 7.3H11" stroke="#444" stroke-width="1"/><path d="M7 7.2L4.6 6.3" stroke="#b07a50" stroke-width="1"/></svg><b>Core 0 Clock (perf #2/2)</b></div><div class="c" style="letter-spacing:-0.25px">4,275.0 MHz</div><div class="c" style="letter-spacing:-0.25px">3,420.0 MHz</div><div class="c" style="letter-spacing:-0.25px">4,350.0 MHz</div><div class="c" style="letter-spacing:-0.25px">4,225.8 MHz</div></div><div class="r o" style="top:187px"><div class="c0"><svg class="ic" width="14" height="14" viewBox="0 0 14 14"><circle cx="7" cy="7" r="5.7" fill="#f2f2f2" stroke="url(#ckg)" stroke-width="1.5"/><path d="M7 7.3H11" stroke="#444" stroke-width="1"/><path d="M7 7.2L4.6 6.3" stroke="#b07a50" stroke-width="1"/></svg><b>Core 1 Clock (perf #2/1)</b></div><div class="c" style="letter-spacing:-0.25px">3,400.0 MHz</div><div class="c" style="letter-spacing:-0.25px">3,400.0 MHz</div><div class="c" style="letter-spacing:-0.25px">4,350.0 MHz</div><div class="c" style="letter-spacing:-0.25px">4,212.0 MHz</div></div><div class="r" style="top:204px"><div class="c0"><svg class="ic" width="14" height="14" viewBox="0 0 14 14"><circle cx="7" cy="7" r="5.7" fill="#f2f2f2" stroke="url(#ckg)" stroke-width="1.5"/><path d="M7 7.3H11" stroke="#444" stroke-width="1"/><path d="M7 7.2L4.6 6.3" stroke="#b07a50" stroke-width="1"/></svg><b>Core 2 Clock (perf #2/4)</b></div><div class="c" style="letter-spacing:-0.25px">4,275.0 MHz</div><div class="c" style="letter-spacing:-0.25px">3,420.0 MHz</div><div class="c" style="letter-spacing:-0.25px">4,325.0 MHz</div><div class="c" style="letter-spacing:-0.25px">4,222.2 MHz</div></div><div class="r o" style="top:221px"><div class="c0"><svg class="ic" width="14" height="14" viewBox="0 0 14 14"><circle cx="7" cy="7" r="5.7" fill="#f2f2f2" stroke="url(#ckg)" stroke-width="1.5"/><path d="M7 7.3H11" stroke="#444" stroke-width="1"/><path d="M7 7.2L4.6 6.3" stroke="#b07a50" stroke-width="1"/></svg><b>Core 3 Clock (perf #2/3)</b></div><div class="c" style="letter-spacing:-0.25px">4,275.0 MHz</div><div class="c" style="letter-spacing:-0.25px">3,420.0 MHz</div><div class="c" style="letter-spacing:-0.25px">4,325.0 MHz</div><div class="c" style="letter-spacing:-0.25px">4,213.1 MHz</div></div><div class="r" style="top:238px"><div class="c0"><svg class="ic" width="14" height="14" viewBox="0 0 14 14"><circle cx="7" cy="7" r="5.7" fill="#f2f2f2" stroke="url(#ckg)" stroke-width="1.5"/><path d="M7 7.3H11" stroke="#444" stroke-width="1"/><path d="M7 7.2L4.6 6.3" stroke="#b07a50" stroke-width="1"/></svg><b>Core 4 Clock (perf #2/6)</b></div><div class="c" style="letter-spacing:-0.25px">4,275.0 MHz</div><div class="c" style="letter-spacing:-0.25px">3,420.0 MHz</div><div class="c" style="letter-spacing:-0.25px">4,325.0 MHz</div><div class="c" style="letter-spacing:-0.25px">4,219.4 MHz</div></div><div class="r o" style="top:255px"><div class="c0"><svg class="ic" width="14" height="14" viewBox="0 0 14 14"><circle cx="7" cy="7" r="5.7" fill="#f2f2f2" stroke="url(#ckg)" stroke-width="1.5"/><path d="M7 7.3H11" stroke="#444" stroke-width="1"/><path d="M7 7.2L4.6 6.3" stroke="#b07a50" stroke-width="1"/></svg><b>Core 5 Clock (perf #2/5)</b></div><div class="c" style="letter-spacing:-0.25px">4,250.0 MHz</div><div class="c" style="letter-spacing:-0.25px">3,420.0 MHz</div><div class="c" style="letter-spacing:-0.25px">4,300.0 MHz</div><div class="c" style="letter-spacing:-0.25px">4,229.6 MHz</div></div><div class="r" style="top:272px"><div class="c0"><svg class="ic" width="14" height="14" viewBox="0 0 14 14"><circle cx="7" cy="7" r="5.7" fill="#f2f2f2" stroke="url(#ckg)" stroke-width="1.5"/><path d="M7 7.3H11" stroke="#444" stroke-width="1"/><path d="M7 7.2L4.6 6.3" stroke="#b07a50" stroke-width="1"/></svg><b>Core 6 Clock (perf #2/8)</b></div><div class="c" style="letter-spacing:-0.25px">4,250.0 MHz</div><div class="c" style="letter-spacing:-0.25px">3,420.0 MHz</div><div class="c" style="letter-spacing:-0.25px">4,300.0 MHz</div><div class="c" style="letter-spacing:-0.25px">4,176.0 MHz</div></div><div class="r o" style="top:289px"><div class="c0"><svg class="ic" width="14" height="14" viewBox="0 0 14 14"><circle cx="7" cy="7" r="5.7" fill="#f2f2f2" stroke="url(#ckg)" stroke-width="1.5"/><path d="M7 7.3H11" stroke="#444" stroke-width="1"/><path d="M7 7.2L4.6 6.3" stroke="#b07a50" stroke-width="1"/></svg><b>Core 7 Clock (perf #1/12)</b></div><div class="c" style="letter-spacing:-0.25px">4,275.0 MHz</div><div class="c" style="letter-spacing:-0.25px">3,420.0 MHz</div><div class="c" style="letter-spacing:-0.25px">4,300.0 MHz</div><div class="c" style="letter-spacing:-0.25px">4,177.0 MHz</div></div><div class="r" style="top:306px"><div class="c0"><svg class="ic" width="14" height="14" viewBox="0 0 14 14"><circle cx="7" cy="7" r="5.7" fill="#f2f2f2" stroke="url(#ckg)" stroke-width="1.5"/><path d="M7 7.3H11" stroke="#444" stroke-width="1"/><path d="M7 7.2L4.6 6.3" stroke="#b07a50" stroke-width="1"/></svg><b>Core 8 Clock (perf #2/10)</b></div><div class="c" style="letter-spacing:-0.25px">4,275.0 MHz</div><div class="c" style="letter-spacing:-0.25px">3,400.0 MHz</div><div class="c" style="letter-spacing:-0.25px">4,325.0 MHz</div><div class="c" style="letter-spacing:-0.25px">4,216.8 MHz</div></div><div class="r o" style="top:323px"><div class="c0"><svg class="ic" width="14" height="14" viewBox="0 0 14 14"><circle cx="7" cy="7" r="5.7" fill="#f2f2f2" stroke="url(#ckg)" stroke-width="1.5"/><path d="M7 7.3H11" stroke="#444" stroke-width="1"/><path d="M7 7.2L4.6 6.3" stroke="#b07a50" stroke-width="1"/></svg><b>Core 9 Clock (perf #3/7)</b></div><div class="c" style="letter-spacing:-0.25px">4,250.0 MHz</div><div class="c" style="letter-spacing:-0.25px">3,400.0 MHz</div><div class="c" style="letter-spacing:-0.25px">4,325.0 MHz</div><div class="c" style="letter-spacing:-0.25px">4,175.2 MHz</div></div><div class="r" style="top:340px"><div class="c0"><svg class="ic" width="14" height="14" viewBox="0 0 14 14"><circle cx="7" cy="7" r="5.7" fill="#f2f2f2" stroke="url(#ckg)" stroke-width="1.5"/><path d="M7 7.3H11" stroke="#444" stroke-width="1"/><path d="M7 7.2L4.6 6.3" stroke="#b07a50" stroke-width="1"/></svg><b>Core 10 Clock (perf #4/9)</b></div><div class="c" style="letter-spacing:-0.25px">4,250.0 MHz</div><div class="c" style="letter-spacing:-0.25px">3,420.0 MHz</div><div class="c" style="letter-spacing:-0.25px">4,325.0 MHz</div><div class="c" style="letter-spacing:-0.25px">4,246.6 MHz</div></div><div class="r o" style="top:357px"><div class="c0"><svg class="ic" width="14" height="14" viewBox="0 0 14 14"><circle cx="7" cy="7" r="5.7" fill="#f2f2f2" stroke="url(#ckg)" stroke-width="1.5"/><path d="M7 7.3H11" stroke="#444" stroke-width="1"/><path d="M7 7.2L4.6 6.3" stroke="#b07a50" stroke-width="1"/></svg><b style="letter-spacing:0.10px">Core 11 Clock (perf #5/...</b></div><div class="c" style="letter-spacing:-0.25px">4,275.0 MHz</div><div class="c" style="letter-spacing:-0.25px">3,420.0 MHz</div><div class="c" style="letter-spacing:-0.25px">4,300.0 MHz</div><div class="c" style="letter-spacing:-0.25px">4,086.8 MHz</div></div><div class="r" style="top:374px"><div class="c0"><svg class="ic" width="14" height="14" viewBox="0 0 14 14"><circle cx="7" cy="7" r="5.7" fill="#f2f2f2" stroke="url(#ckg)" stroke-width="1.5"/><path d="M7 7.3H11" stroke="#444" stroke-width="1"/><path d="M7 7.2L4.6 6.3" stroke="#b07a50" stroke-width="1"/></svg><b style="letter-spacing:-0.47px">Bus Clock</b></div><div class="c" style="letter-spacing:-0.25px">100.0 MHz</div><div class="c" style="letter-spacing:-0.25px">100.0 MHz</div><div class="c" style="letter-spacing:-0.25px">100.0 MHz</div><div class="c" style="letter-spacing:-0.25px">100.0 MHz</div></div><div class="r o" style="top:391px"><div class="c0"><svg class="ic" width="14" height="14" viewBox="0 0 14 14"><circle cx="7" cy="7" r="5.7" fill="#f2f2f2" stroke="url(#ckg)" stroke-width="1.5"/><path d="M7 7.3H11" stroke="#444" stroke-width="1"/><path d="M7 7.2L4.6 6.3" stroke="#b07a50" stroke-width="1"/></svg><b style="letter-spacing:-0.30px">Max CPU/Thread Usage</b></div><div class="c" style="letter-spacing:0.10px">72.0 %</div><div class="c" style="letter-spacing:0.10px">32.8 %</div><div class="c" style="letter-spacing:0.10px">97.7 %</div><div class="c" style="letter-spacing:0.10px">64.1 %</div></div><div class="r" style="top:408px"><div class="c0"><svg class="ic" width="14" height="14" viewBox="0 0 14 14"><circle cx="7" cy="7" r="5.7" fill="#f2f2f2" stroke="url(#ckg)" stroke-width="1.5"/><path d="M7 7.3H11" stroke="#444" stroke-width="1"/><path d="M7 7.2L4.6 6.3" stroke="#b07a50" stroke-width="1"/></svg><b style="letter-spacing:-0.31px">Total CPU Usage</b></div><div class="c" style="letter-spacing:0.10px">14.8 %</div><div class="c" style="letter-spacing:0.10px">5.1 %</div><div class="c" style="letter-spacing:0.10px">23.7 %</div><div class="c" style="letter-spacing:0.10px">12.6 %</div></div><div class="r o" style="top:425px"><div class="c0"><b></b></div><div class="c"></div><div class="c"></div><div class="c"></div><div class="c"></div></div><div class="r g" style="top:442px"><div class="c0"><svg class="ic" width="14" height="16" viewBox="0 0 14 16"><g stroke="#bdbdbd" stroke-width="1"><path d="M1 4.5H13M1 7.5H13M1 10.5H13M1 13.5H13"/></g><rect x="3" y="1" width="8" height="14" rx="1" fill="url(#chg)"/></svg><em style="letter-spacing:-0.27px"></em></div><div class="c"></div><div class="c"></div><div class="c"></div><div class="c"></div></div></div>
  <div id="sb"><svg style="position:absolute;left:0;top:1px" width="17" height="17" viewBox="0 0 17 17"><path d="M4 10.500L8 6.500L12 10.500" stroke="#505050" stroke-width="1.600" fill="none"/></svg><i></i><svg style="position:absolute;left:0;top:455px" width="17" height="17" viewBox="0 0 17 17"><path d="M4 6.500L8 10.500L12 6.500" stroke="#505050" stroke-width="1.600" fill="none"/></svg></div>
 </div>
 <div id="bar">
<div class="tbn" style="left:1px;top:7px;width:42px"><svg width="40" height="33" viewBox="0 0 40 33"><g fill="#2b8fe9" stroke="#f3f7fb" stroke-width="1" stroke-linejoin="round"><path d="M3.800 17.200L11.500 8.500V13.700H18.300V20.700H11.500V26Z"/><path d="M36.200 17.200L28.500 8.500V13.700H21.700V20.700H28.500V26Z"/></g></svg></div><div class="tbn" style="left:45px;top:7px;width:42px;background:#cccccc;border-color:#c3c3c3"><svg width="40" height="33" viewBox="0 0 40 33"><g fill="#7db4e4" stroke="#d9dfe4" stroke-width="1" stroke-linejoin="round"><path d="M19.300 17.200L12 9V13.700H4.800V20.700H12V25.500Z"/><path d="M20.700 17.200L28 9V13.700H35V20.700H28V25.500Z"/></g></svg></div><div class="tbn" style="left:197px;top:7px;width:42px"><svg width="40" height="33" viewBox="0 0 40 33"><defs><linearGradient id="mon" x1="0" y1="0" x2="1" y2="1"><stop offset="0" stop-color="#9fd4f7"/><stop offset=".35" stop-color="#1f8de3"/><stop offset=".8" stop-color="#1a82d8"/><stop offset="1" stop-color="#6fc0f2"/></linearGradient><linearGradient id="std" x1="0" y1="0" x2="0" y2="1"><stop offset="0" stop-color="#c9cdd0"/><stop offset="1" stop-color="#8e9497"/></linearGradient></defs><path d="M20 9.500H29.500V17" stroke="#869095" stroke-width="1.600" fill="none"/><ellipse cx="12.500" cy="17.300" rx="4.800" ry="2.200" fill="url(#std)"/><path d="M10.500 13H15V17H10.500Z" fill="#a9afb3"/><path d="M6 2.300L20.400 4.700L18.700 14.800L4.500 12.900Z" fill="url(#mon)" stroke="#5d6a73" stroke-width="1"/><path d="M6.500 5.500Q11 2.500 18.500 5.200L18.300 6.300Q11 4 6.200 7.300Z" fill="#d6efff" opacity=".85"/><ellipse cx="27.500" cy="30.500" rx="5" ry="2.100" fill="url(#std)"/><path d="M25.500 26H30V30.500H25.500Z" fill="#a9afb3"/><path d="M21 15.500L35 17.600L33.300 28.500L19.400 26.200Z" fill="url(#mon)" stroke="#5d6a73" stroke-width="1"/><path d="M21.300 18.700Q26 15.700 33.300 18.300L33.100 19.400Q26 17.200 21 20.500Z" fill="#d6efff" opacity=".85"/></svg></div><div id="tm">0:03:19</div><div class="tbn" style="left:308px;top:7px;width:42px"><svg width="40" height="33" viewBox="0 0 40 33"><circle cx="19.8" cy="16.9" r="15.4" fill="#fff" stroke="#2a2a2a" stroke-width=".9"/><path d="M19.80 2.80L19.80 6.10M26.85 4.69L25.60 6.85M32.01 9.85L29.85 11.10M33.90 16.90L30.60 16.90M32.01 23.95L29.85 22.70M26.85 29.11L25.60 26.95M19.80 31.00L19.80 27.70M12.75 29.11L14.00 26.95M7.59 23.95L9.75 22.70M5.70 16.90L9.00 16.90M7.59 9.85L9.75 11.10M12.75 4.69L14.00 6.85" stroke="#222" stroke-width="1.300"/><path d="M18.8 16.9H28.0" stroke="#111" stroke-width="2.200"/><path d="M19.8 16.9L21.8 4.6" stroke="#111" stroke-width="1.400"/></svg></div><div class="tbn" style="left:353px;top:7px;width:42px"><svg width="40" height="33" viewBox="0 0 40 33"><defs><linearGradient id="pg" x1="0" y1="0" x2="1" y2="1"><stop offset="0" stop-color="#ffffff"/><stop offset="1" stop-color="#ececec"/></linearGradient></defs><ellipse cx="20" cy="29.300" rx="13" ry="1.800" fill="#9a9a9a" opacity=".35"/><path d="M9.500 3H26.500L31.500 8V28.500H9.500Z" fill="url(#pg)" stroke="#cfcfcf" stroke-width=".8"/><path d="M26.500 3V8H31.500Z" fill="#f6f6f6" stroke="#cfcfcf" stroke-width=".7"/><path d="M13 7.5H24M13 9.5H24M13 11.5H24M13 13.5H24M13 15.5H24M13 17.5H24M13 19.5H24M13 21.5H24M13 23.5H24M13 25.5H24M13 7V25.500M16.500 7V25.500M20.500 7V25.500M24 7V25.500" stroke="#c9c9c9" stroke-width=".7" fill="none"/><path d="M27 19H31.500V22.800H35.500V27.300H31.500V31.300H27V27.300H23V22.800H27Z" fill="#8fbf2f" stroke="#c6e28a" stroke-width="1" stroke-linejoin="round"/></svg></div><div class="tbn" style="left:399px;top:7px;width:42px"><svg width="40" height="33" viewBox="0 0 40 33"><defs><linearGradient id="gg" x1="0" y1="0" x2="1" y2="1"><stop offset="0" stop-color="#fbfcfc"/><stop offset=".5" stop-color="#d4d9dc"/><stop offset="1" stop-color="#9aa2a6"/></linearGradient><linearGradient id="gg2" x1="0" y1="0" x2="1" y2="1"><stop offset="0" stop-color="#8d9599"/><stop offset="1" stop-color="#eef1f2"/></linearGradient></defs><path d="M16.90 4.93 L17.50 1.16 L21.90 1.16 L22.50 4.93 L25.97 6.37 L29.07 4.12 L32.18 7.23 L29.93 10.33 L31.37 13.80 L35.14 14.40 L35.14 18.80 L31.37 19.40 L29.93 22.87 L32.18 25.97 L29.07 29.08 L25.97 26.83 L22.50 28.27 L21.90 32.04 L17.50 32.04 L16.90 28.27 L13.43 26.83 L10.33 29.08 L7.22 25.97 L9.47 22.87 L8.03 19.40 L4.26 18.80 L4.26 14.40 L8.03 13.80 L9.47 10.33 L7.22 7.23 L10.33 4.12 L13.43 6.37Z" fill="url(#gg)" stroke="#c2c8cb" stroke-width="1.600" stroke-linejoin="round"/><circle cx="19.700" cy="16.500" r="8.300" fill="url(#gg2)"/><circle cx="19.700" cy="16.500" r="5.200" fill="#e3e3e3" stroke="#a7adb0" stroke-width=".7"/></svg></div><div class="tbn" style="left:446px;top:7px;width:42px"><svg width="40" height="33" viewBox="0 0 40 33"><defs><linearGradient id="xg" x1="0" y1="0" x2="1" y2="1"><stop offset="0" stop-color="#1470b0"/><stop offset=".55" stop-color="#3a9ad6"/><stop offset="1" stop-color="#5ab8ea"/></linearGradient></defs><path d="M26.21 5.29 L31.01 10.09 L24.51 16.60 L31.01 23.11 L26.21 27.91 L19.70 21.41 L13.19 27.91 L8.39 23.11 L14.89 16.60 L8.39 10.09 L13.19 5.29 L19.70 11.79Z" fill="url(#xg)"/></svg></div>
 </div>
</div>
</body></html>
